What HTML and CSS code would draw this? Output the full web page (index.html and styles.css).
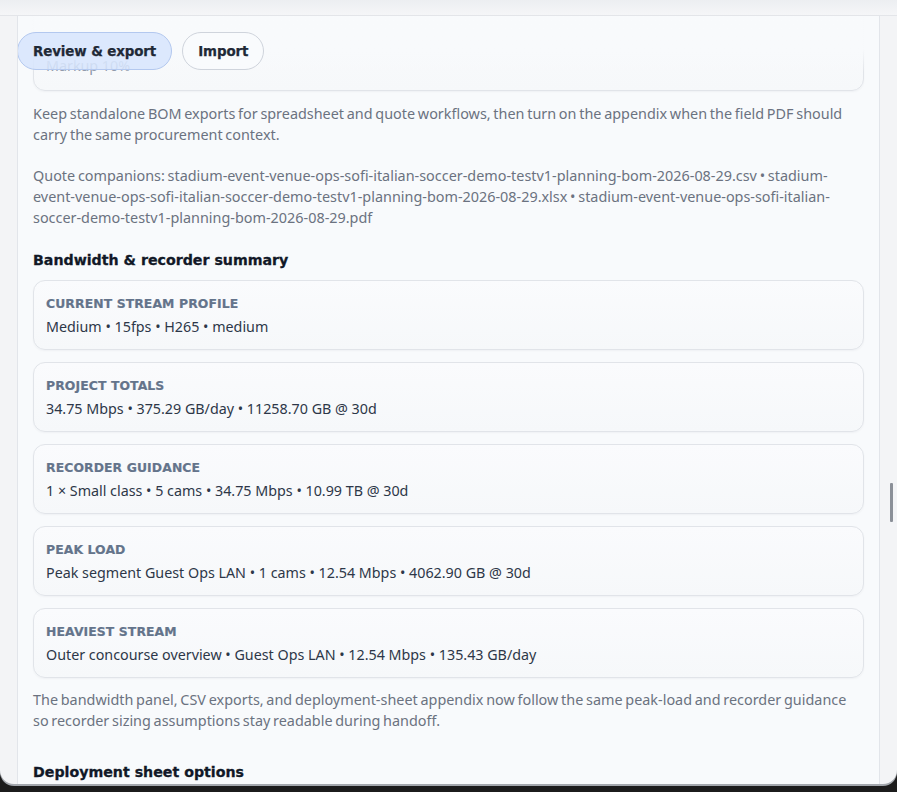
FILE: index.html
```html
<!DOCTYPE html>
<html>
<head>
<meta charset="utf-8">
<link rel="stylesheet" href="styles.css">
</head>
<body>
<div class="window">
  <div class="topbar"></div>
  <div class="viewport">
    <div class="panel">
      <div class="tabs">
        <button class="tab tab-active">Review &amp; export</button>
        <button class="tab">Import</button>
      </div>
      <div class="content">
        <div class="card card-cut">
          <div class="card-value muted">Markup 10%</div>
        </div>
        <p class="note note-first">Keep standalone BOM exports for spreadsheet and quote workflows, then turn on the appendix when the field PDF should carry the same procurement context.</p>
        <p class="note">Quote companions: stadium-event-venue-ops-sofi-italian-soccer-demo-testv1-planning-bom-2026-08-29.csv • stadium-event-venue-ops-sofi-italian-soccer-demo-testv1-planning-bom-2026-08-29.xlsx • stadium-event-venue-ops-sofi-italian-soccer-demo-testv1-planning-bom-2026-08-29.pdf</p>
        <h3 class="section-title">Bandwidth &amp; recorder summary</h3>
        <div class="cards">
          <div class="card">
            <div class="card-label">Current stream profile</div>
            <div class="card-value">Medium • 15fps • H265 • medium</div>
          </div>
          <div class="card">
            <div class="card-label">Project totals</div>
            <div class="card-value">34.75 Mbps • 375.29 GB/day • 11258.70 GB @ 30d</div>
          </div>
          <div class="card">
            <div class="card-label">Recorder guidance</div>
            <div class="card-value">1 × Small class • 5 cams • 34.75 Mbps • 10.99 TB @ 30d</div>
          </div>
          <div class="card">
            <div class="card-label">Peak load</div>
            <div class="card-value">Peak segment Guest Ops LAN • 1 cams • 12.54 Mbps • 4062.90 GB @ 30d</div>
          </div>
          <div class="card">
            <div class="card-label">Heaviest stream</div>
            <div class="card-value">Outer concourse overview • Guest Ops LAN • 12.54 Mbps • 135.43 GB/day</div>
          </div>
        </div>
        <p class="note note-after">The bandwidth panel, CSV exports, and deployment-sheet appendix now follow the same peak-load and recorder guidance so recorder sizing assumptions stay readable during handoff.</p>
        <h3 class="section-title section-title-2">Deployment sheet options</h3>
      </div>
    </div>
    <div class="scrollbar"><div class="thumb"></div></div>
  </div>
</div>
</body>
</html>
```
FILE: styles.css
```css
* { box-sizing: border-box; }
html, body { margin: 0; padding: 0; }
body {
  background: #1c1c1c;
  width: 897px;
  height: 792px;
  overflow: hidden;
  font-family: "Noto Sans", "Open Sans", sans-serif;
}
.window {
  height: 784px;
  background: #f3f4f6;
  border-radius: 0 0 14px 14px;
  overflow: hidden;
  display: flex;
  flex-direction: column;
  box-shadow: 0 2px 0 #a3a7ad;
}
.topbar {
  height: 16px;
  flex: none;
  background: linear-gradient(#eceef1, #f5f6f8);
  border-bottom: 1px solid #e3e5e9;
}
.viewport {
  flex: 1;
  display: flex;
  overflow: hidden;
  position: relative;
}
.panel {
  margin-left: 17px;
  width: 863px;
  flex: none;
  background: #f8fafc;
  border-left: 1px solid #e2e5ea;
  border-right: 1px solid #e2e5ea;
  position: relative;
  overflow: hidden;
}
.tabs {
  position: absolute;
  left: -1px;
  top: 0;
  width: 862px;
  height: 56px;
  padding-top: 16px;
  display: flex;
  gap: 10px;
  background: linear-gradient(rgba(248,250,252,0.97) 60%, rgba(248,250,252,0));
  z-index: 2;
}
.tab {
  height: 38px;
  padding: 0 15px;
  border-radius: 19px;
  border: 1px solid #cfd4dc;
  background: rgba(250,251,253,0.75);
  font-family: "DejaVu Sans", Verdana, sans-serif;
  font-weight: bold;
  font-size: 13.4px;
  color: #1f2937;
  letter-spacing: -0.1px;
  -webkit-text-stroke: 0.25px currentColor;
}
.tab-active {
  background: rgba(214,228,252,0.82);
  border-color: #b3c8ef;
}
.content {
  padding: 0 15px 0 15px;
  margin-top: -13px;
}
.card {
  border: 1px solid #e1e4e9;
  border-radius: 12px;
  background: linear-gradient(#fafbfd, #f6f8fa);
  box-shadow: 0 1px 2px rgba(15,23,42,0.04);
  padding: 14px 12px 11px;
}
.card-cut {
  height: 88px;
  display: flex;
  align-items: flex-end;
  padding-bottom: 13px;
}
.card-label {
  font-family: "DejaVu Sans", Verdana, sans-serif;
  font-weight: bold;
  font-size: 12.4px;
  line-height: 18px;
  text-transform: uppercase;
  color: #64748b;
  letter-spacing: 0.1px;
  -webkit-text-stroke: 0.2px currentColor;
}
.card-value {
  margin-top: 3px;
  font-size: 14.3px;
  line-height: 22px;
  color: #2d3748;
}
.card-value.muted {
  color: #8a94a6;
  margin: 0;
}
.note {
  margin: 20px 0 0;
  font-size: 14.4px;
  line-height: 21px;
  color: #6b7280;
  word-spacing: -1px;
}
.note-first { margin-top: 12px; }
.note-after { margin-top: 11px; }
.section-title {
  margin: 22px 0 10px;
  font-family: "DejaVu Sans", Verdana, sans-serif;
  font-weight: bold;
  font-size: 14.2px;
  line-height: 20px;
  color: #111827;
  -webkit-text-stroke: 0.3px currentColor;
}
.section-title-2 { margin-top: 31px; }
.cards {
  display: flex;
  flex-direction: column;
  gap: 12px;
}
.scrollbar {
  flex: 1;
  position: relative;
}
.thumb {
  position: absolute;
  left: 10px;
  top: 467px;
  width: 3px;
  height: 39px;
  background: #8b9098;
  border-radius: 1px;
}
```
